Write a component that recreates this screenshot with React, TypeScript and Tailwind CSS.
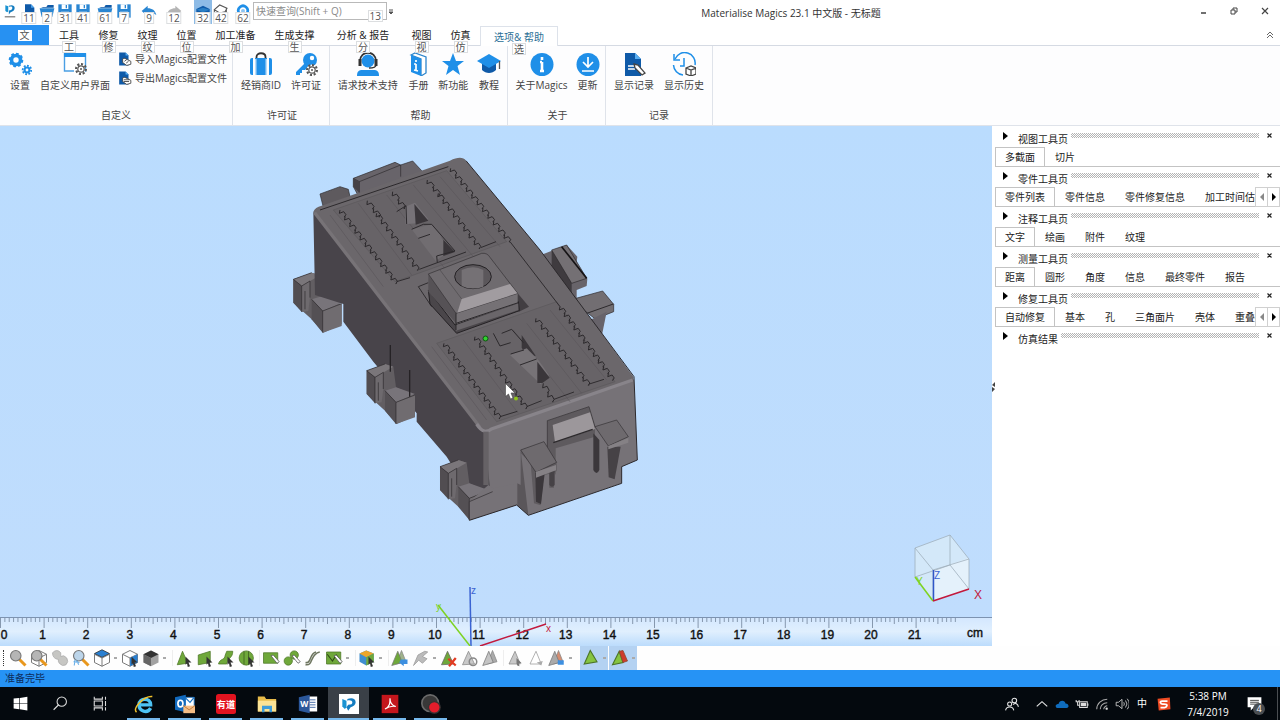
import { ReactNode } from 'react';
import clsx from 'clsx';

const BLUE = '#1f8fe8';
const NAVY = '#0f5aa8';

/* ---------- small drawing helpers ---------- */

const Icon = (props: { size?: string, box?: string, children: ReactNode }) => (
  <svg className={clsx('shrink-0', props.size ?? 'size-6')} viewBox={props.box ?? '0 0 24 24'} fill="none" aria-hidden="true">
    {props.children}
  </svg>
);

const Gear = (props: { x: number, y: number, r: number, color: string, hole?: number, width?: number }) => (
  <g>
    <circle cx={props.x} cy={props.y} r={props.r} stroke={props.color} strokeWidth={props.width ?? 3} />
    <circle
      cx={props.x}
      cy={props.y}
      r={props.r + 1.8}
      stroke={props.color}
      strokeWidth="2"
      pathLength="16"
      strokeDasharray="1.1 0.9"
    />
    {props.hole !== undefined && <circle cx={props.x} cy={props.y} r={props.hole} fill={props.color} />}
  </g>
);

/* ---------- title bar ---------- */

const KeyTip = (props: { children: ReactNode, className?: string }) => (
  <span
    className={clsx(
      'absolute z-10 border border-[#dcdee0] bg-white px-px text-[10px] leading-[10px] text-[#555]',
      props.className ?? 'left-1/2 top-3 -translate-x-1/2',
    )}
  >
    {props.children}
  </span>
);

const FileGlyph = () => <Icon size="size-4"><path d="M6 2h9l5 5v14H6z" fill={NAVY} /><path d="M15 2v5h5z" fill="#4ba3ee" /></Icon>;
const FolderGlyph = () => <Icon size="size-4"><path d="M3 6h8l2-3h9v4H6z" fill={NAVY} /><path d="M1 8h22l-3 13H4z" fill="#2a86d2" /></Icon>;
const SaveGlyph = () => <Icon size="size-4"><path d="M2 2h20v20H2z" fill="#2a86d2" /><path d="M7 2h10v7H7zM6 13h12v9H6z" fill="#fff" /><path d="M13 3h2v5h-2z" fill="#2a86d2" /></Icon>;
const UndoGlyph = (props: { color: string, flip?: boolean }) => (
  <Icon size="size-4">
    <path
      d={props.flip ? 'M23 12 14 4v4C7 8 3 11 1 18c4-3 8-3 13-2v4z' : 'M1 12 10 4v4c7 0 11 3 13 10-4-3-8-3-13-2v4z'}
      fill={props.color}
    />
  </Icon>
);

const quickItems: { tip: string, label: string, slot: string, icon: ReactNode }[] = [
  { tip: '11', label: 'New', slot: 'w-[18px]', icon: <FileGlyph /> },
  { tip: '2', label: 'Open', slot: 'w-[18px]', icon: <FolderGlyph /> },
  { tip: '31', label: 'Save', slot: 'w-[18px]', icon: <SaveGlyph /> },
  { tip: '41', label: 'Save as', slot: 'w-[18px]', icon: <SaveGlyph /> },
  { tip: '61', label: 'Import part', slot: 'ml-1 w-[18px]', icon: <FolderGlyph /> },
  { tip: '7', label: 'Save part', slot: 'ml-px w-[18px]', icon: <SaveGlyph /> },
  { tip: '9', label: 'Undo', slot: 'ml-1 w-6', icon: <UndoGlyph color="#2a86d2" /> },
  { tip: '12', label: 'Redo', slot: 'ml-px w-6', icon: <UndoGlyph color="#b4b4b4" flip /> },
  {
    tip: '32', label: 'Box view', slot: 'ml-2 w-[18px] bg-[#8dbbe6]',
    icon: <Icon size="size-4"><path d="m2 9 10-5 10 5v12H2z" fill={NAVY} /><path d="m2 10 10-3 10 3-10 4z" fill="#2a7fc4" /></Icon>,
  },
  {
    tip: '42', label: 'Mail view', slot: 'w-[18px]',
    icon: <Icon size="size-4"><path d="m2 10 8-7 11 5-3 5-8 2zM2 10v10h18V8" stroke="#555" strokeWidth="1.6" /></Icon>,
  },
  {
    tip: '62', label: 'Reset', slot: 'ml-1 w-[18px]',
    icon: <Icon size="size-4"><path d="M6 15a7 7 0 1 1 12 0" stroke="#1f8fe8" strokeWidth="4" /><circle cx="12" cy="12" r="3" fill="#8cc4f2" /></Icon>,
  },
];

const MagicsLogo = (props: { size: string }) => (
  <Icon size={props.size}>
    <path d="m4 2 5 2v9l-2 1-3-2z" fill="#1a93d2" />
    <path d="M10 3c5-2 10-1 10 4 0 4-3 6-7 7l-3 4v-7c4 0 6-1 6-4s-3-3-6-2z" fill="#137cc0" />
    <path d="M3 22h18" stroke="#444" strokeWidth="1.500" />
  </Icon>
);

const TitleBar = () => (
  <header className="flex h-6 items-start">
    <div className="flex w-5 flex-col items-center pt-1">
      <MagicsLogo size="size-[14px]" />
    </div>
    {quickItems.map((item) => (
      <button key={item.tip} aria-label={item.label} className={clsx('relative flex h-6 items-start justify-center pt-[3px]', item.slot)}>
        {item.icon}
        <KeyTip>{item.tip}</KeyTip>
      </button>
    ))}
    <div className="relative ml-px w-[134px]">
      <input
        aria-label="快速查询"
        placeholder="快速查询(Shift + Q)"
        className="mt-[2px] block h-[18px] w-full border border-[#b9b9b9] bg-white px-0.5 text-[10px] leading-4 placeholder:text-[#8a8a8a]"
      />
      <KeyTip className="right-1 top-[10px]">13</KeyTip>
    </div>
    <button aria-label="Customize toolbar" className="flex h-6 w-2 items-center justify-center">
      <Icon size="size-[6px]" box="0 0 6 6"><path d="M1 1h4M1 3h4L3 5z" stroke="#555" fill="#555" /></Icon>
    </button>
    <h1 className="flex-1 pt-[5px] text-center text-[10px] leading-4 text-[#333]">Materialise Magics 23.1 中文版 - 无标题</h1>
    <div className="flex text-[#444]">
      <button aria-label="Minimize" className="flex h-[22px] w-[31px] items-center justify-center">
        <Icon size="size-[10px]" box="0 0 10 10"><path d="M3 7h5" stroke="#333" strokeWidth="1.4" /></Icon>
      </button>
      <button aria-label="Restore" className="flex h-[22px] w-[31px] items-center justify-center">
        <Icon size="size-[10px]" box="0 0 10 10"><path d="M2 4h4v4H2zM4 4V2h4v4H6" stroke="#444" /></Icon>
      </button>
      <button aria-label="Close" className="flex h-[22px] w-[31px] items-center justify-center">
        <Icon size="size-[10px]" box="0 0 10 10"><path d="m2 2 6 6m0-6L2 8" stroke="#444" strokeWidth="1.2" /></Icon>
      </button>
    </div>
  </header>
);

/* ---------- ribbon ---------- */

const ribbonTabs: { label: string, tip: string, width: string }[] = [
  { label: '工具', tip: '工', width: 'w-10' },
  { label: '修复', tip: '修', width: 'w-[39px]' },
  { label: '纹理', tip: '纹', width: 'w-[39px]' },
  { label: '位置', tip: '位', width: 'w-[39px]' },
  { label: '加工准备', tip: '加', width: 'w-[59px]' },
  { label: '生成支撑', tip: '生', width: 'w-[59px]' },
  { label: '分析 & 报告', tip: '分', width: 'w-[78px]' },
  { label: '视图', tip: '视', width: 'w-[39px]' },
  { label: '仿真', tip: '仿', width: 'w-[39px]' },
  { label: '选项& 帮助', tip: '选', width: 'w-[78px]' },
];

const RibbonTabs = () => (
  <nav className="flex h-[22px] items-end border-b border-[#d5dae3] text-[10px]">
    <button className="flex h-5 w-[49px] items-center justify-center bg-[#2791f2]">
      <span className="bg-white px-0.5 leading-[11px] text-[#555]">文</span>
    </button>
    {ribbonTabs.map((tab) => (
      <button
        key={tab.label}
        className={clsx(
          'relative flex h-5 items-start justify-center whitespace-nowrap pt-1 leading-3',
          tab.width,
          tab.tip === '选' ? '-mb-px border-x border-t border-[#dde2ea] bg-white text-[#2c6f96]' : 'text-[#222]',
        )}
      >
        {tab.label}
        <KeyTip className="left-1/2 top-4 -translate-x-1/2">{tab.tip}</KeyTip>
      </button>
    ))}
    <button aria-label="Collapse ribbon" className="ml-auto mr-1 flex h-5 w-3 items-center justify-center">
      <Icon size="size-2" box="0 0 8 8"><path d="m1 4 3-3 3 3M1 7l3-3 3 3" stroke="#666" /></Icon>
    </button>
  </nav>
);

const PageIcon = (props: { out?: boolean }) => (
  <Icon size="size-[14px]">
    <path d="M2 1h11l5 5v17H2z" fill={NAVY} />
    <path d="M13 1v5h5z" fill="#57aef2" />
    <path d="M8 12c3-3 5 0 8 1l6 3v5l-7 2-7-5z" fill="#fff" stroke="#444" strokeWidth="1.5" />
    <path d={props.out ? 'M10 15h9M10 18h9' : 'M11 16l4-3M14 19l4-3'} stroke="#444" strokeWidth="1.5" />
  </Icon>
);

const RibbonButton = (props: { label: string, width: string, children: ReactNode }) => (
  <button className={clsx('flex flex-col items-center whitespace-nowrap text-[10px] leading-4 text-[#444]', props.width)}>
    <Icon>{props.children}</Icon>
    <span className="mt-px">{props.label}</span>
  </button>
);

const RibbonGroup = (props: { title: string, width: string, children: ReactNode }) => (
  <section className={clsx('flex flex-col justify-between border-r border-[#dfe3ea] pb-0.5 pt-[6px]', props.width)}>
    <div className="flex justify-center">{props.children}</div>
    <h2 className="text-center text-[10px] leading-4 text-[#444]">{props.title}</h2>
  </section>
);

const Ribbon = () => (
  <div className="flex h-20 border-b border-[#dfe3ea] bg-[#fdfdfe]">
    <RibbonGroup title="自定义" width="w-[233px]">
      <RibbonButton label="设置" width="w-10">
        <Gear x={8} y={8} r={4.5} color={BLUE} width={3.6} />
        <Gear x={19} y={18} r={2.4} color={BLUE} width={2} />
      </RibbonButton>
      <RibbonButton label="自定义用户界面" width="w-[70px]">
        <path d="M1.5 2h21v17h-21z" fill="#fff" stroke="#4a9fe4" strokeWidth="1.4" />
        <path d="M1 1h22v4H1z" fill={BLUE} />
        <path d="M11 13h11v10H11z" fill="#fff" />
        <Gear x={18} y={17} r={3.2} color="#555" width={1.2} hole={1} />
      </RibbonButton>
      <div className="-mt-px ml-2 flex flex-1 flex-col gap-[3px] text-[10px] leading-4 text-[#444]">
        <button className="flex items-center gap-[3px] whitespace-nowrap"><PageIcon />导入Magics配置文件</button>
        <button className="flex items-center gap-[3px] whitespace-nowrap"><PageIcon out />导出Magics配置文件</button>
      </div>
    </RibbonGroup>

    <RibbonGroup title="许可证" width="w-[97px] pl-0.5">
      <RibbonButton label="经销商ID" width="w-12">
        <path d="M7.5 8V5c0-5 9-5 9 0v3" stroke="#333" strokeWidth="1.8" />
        <path d="M1 8q0-2 2-2h1v17H3q-2 0-2-2zM6 6h12v17H6zM20 6h1q2 0 2 2v13q0 2-2 2h-1z" fill={BLUE} />
        <path d="M6 7h1.5v16H6zM16.500 7H18v16h-1.500z" fill="#b9dcf8" />
      </RibbonButton>
      <RibbonButton label="许可证" width="w-[42px]">
        <path d="m11 11-9 9v3h4v-2h2v-3h3l4-4z" fill={BLUE} />
        <circle cx="16" cy="8" r="7" fill={BLUE} />
        <circle cx="18" cy="6" r="2.200" fill="#fff" />
        <circle cx="18" cy="18" r="5.500" fill="#fff" />
        <Gear x={18} y={18} r={3.2} color="#555" width={1.2} hole={1} />
      </RibbonButton>
    </RibbonGroup>

    <RibbonGroup title="帮助" width="w-[178px] pl-1">
      <RibbonButton label="请求技术支持" width="w-[68px]">
        <circle cx="12" cy="9" r="6.500" fill={BLUE} />
        <path d="M4 9c0-11 16-11 16 0" stroke="#333" strokeWidth="1.8" />
        <path d="M2.500 7h3v7h-3zM18.500 7h3v7h-3z" fill="#333" />
        <path d="M20 13c0 2-3 3-7 3" stroke="#333" strokeWidth="1.300" />
        <path d="M1 24c0-6 3-6 7-6h8c4 0 7 0 7 6z" fill={BLUE} />
      </RibbonButton>
      <RibbonButton label="手册" width="w-[34px]">
        <path d="m4 3 4-2 11 4v16l-5 3V7z" fill="#fff" stroke="#2e86cc" strokeWidth="1.300" />
        <path d="m4 3 10 4v17L4 20z" fill={BLUE} />
        <path d="M9 8v2M9 12v7M7 12h2M7 18l4 1" stroke="#fff" strokeWidth="1.700" />
      </RibbonButton>
      <RibbonButton label="新功能" width="w-9">
        <path d="m12 1 3 8h8l-6.500 5 2.500 9-7-5-7 5 2.500-9L1 9h8z" fill={BLUE} />
      </RibbonButton>
      <RibbonButton label="教程" width="w-9">
        <path d="M5 11v7c4 4 10 4 14 0v-7l-7 4z" fill={NAVY} />
        <path d="m0 9 12-7 12 7-12 7z" fill={BLUE} />
        <path d="M22.500 9v8" stroke="#555" strokeWidth="1.300" />
      </RibbonButton>
    </RibbonGroup>

    <RibbonGroup title="关于" width="w-[98px] pl-0.5">
      <RibbonButton label="关于Magics" width="w-[60px]">
        <circle cx="12" cy="12.500" r="11.500" fill={BLUE} />
        <path d="M12 5v3M12 10v9M10 10h2M10 19h4" stroke="#fff" strokeWidth="2.600" />
      </RibbonButton>
      <RibbonButton label="更新" width="w-8">
        <circle cx="12" cy="12.500" r="11.500" fill={BLUE} />
        <path d="M12 5v10m-5-5 5 5 5-5M6 19h12" stroke="#fff" strokeWidth="1.700" />
      </RibbonButton>
    </RibbonGroup>

    <RibbonGroup title="记录" width="w-[107px]">
      <RibbonButton label="显示记录" width="w-[50px]">
        <path d="M3 1h10l6 6v17H3z" fill={NAVY} />
        <path d="M13 1v6h6z" fill="#57aef2" />
        <path d="M6 14h7M6 17h7" stroke="#fff" strokeWidth="1.300" />
        <path d="m12 12 4 1 7 8-3 2-7-7z" fill="#fff" stroke="#444" strokeWidth="1.300" />
      </RibbonButton>
      <RibbonButton label="显示历史" width="w-[50px]">
        <path d="M3 7A10.500 10.500 0 0 1 23 13M11 23A10.500 10.500 0 0 1 1.500 13" stroke={BLUE} strokeWidth="1.500" />
        <path d="M2 2v6h6M12 6v8H8" stroke={BLUE} strokeWidth="1.500" />
        <path d="m14 16 5-2 5 2v6l-5 2-5-2zM14 16l5 2 5-2M19 18v6" fill="#fff" stroke="#444" strokeWidth="1.300" />
      </RibbonButton>
    </RibbonGroup>
  </div>
);

/* ---------- 3D view ---------- */

type Point = [number, number];

// Jagged slot edge running from one point to another
const teeth = ([x1, y1]: Point, [x2, y2]: Point, count: number) => {
  const dx = (x2 - x1) / count;
  const dy = (y2 - y1) / count;
  let d = `M${x1} ${y1}`;
  for (let i = 0; i < count; i++) {
    d += `l${dx * 0.2 - 5} ${dy * 0.5}l13 -5l${dx * 0.5 - 1} ${dy * 0.45}l-5 7l${dx * 0.3 - 2} ${dy * 0.05 - 2}`;
  }
  return d;
};

const slotRows: [Point, Point, number][] = [
  [[180, 180], [350, 400], 11],
  [[262, 152], [300, 200], 2],
  [[290, 190], [415, 360], 8],
  [[338, 125], [375, 175], 2],
  [[442, 90], [480, 135], 2],
  [[475, 130], [600, 295], 8],
  [[512, 55], [690, 275], 11],
  [[492, 580], [660, 805], 11],
  [[585, 560], [740, 775], 10],
  [[790, 700], [820, 755], 2],
  [[768, 505], [928, 705], 9],
  [[840, 470], [1000, 690], 11],
];

// Clips on the long side, drawn at their own corner
const SideClip = (props: { x: number, y: number }) => (
  <g transform={`translate(${props.x} ${props.y})`}>
    <path d="M0 20 55 0 80 8 88 70 145 95 145 155 90 180 55 140 0 90z" fill="#625e62" />
    <path d="M0 20 55 0 80 8 25 40z" fill="#7a767a" />
    <path d="M0 20 25 40V118L0 90z" fill="#514d51" />
    <path d="M25 40 50 25V75L45 115 25 118z" fill="#6e6a6e" />
    <path d="M55 80 88 70 145 90 88 115z" fill="#78747a" />
    <path d="M55 80 88 115V180L55 140z" fill="#545054" />
    <path d="M88 115 145 92V160L88 180z" fill="#706c70" />
    <path d="M0 20 25 40V118M25 40 50 25V75M35 55v55M55 80 88 115V180M88 115l57-22M0 20 55 0" stroke="#2c292c" strokeWidth="2" />
  </g>
);

const Part = () => (
  <g transform="translate(280 150) scale(0.333333)" fill="none" strokeLinejoin="round">
    {/* rear clips */}
    <path d="M120 132 180 110 205 118 210 140 130 172z" fill="#5e5a5e" stroke="#2c292c" strokeWidth="2" />
    <path d="M220 85 345 37 362 45 398 33 425 62 425 80 232 132 220 110z" fill="#68646a" stroke="#2c292c" strokeWidth="2" />
    <path d="m220 85 18 10 124-50v35M238 95v35" stroke="#2c292c" strokeWidth="2" />
    <path d="m220 85 18 10v33l-18-18z" fill="#464246" />

    {/* right clips */}
    <path d="m770 320 90-35 32 35-4 30 34 36-2 22-30 12v50z" fill="#68646a" />
    <path d="m815 300 60 75v65l-60-60z" fill="#3f3b3f" />
    <path d="m815 300 45-15 60 100-45 15z" fill="#747074" stroke="#2c292c" strokeWidth="2" />
    <path d="m845 290 75 95" stroke="#151315" strokeWidth="5" />
    <path d="m888 445 80-22 33 40v22l-55 22-52-40z" fill="#726e72" stroke="#2c292c" strokeWidth="2" />
    <path d="m930 510 50-25-16 80z" fill="#67636a" />
    <path d="M915 492 1000 462" stroke="#2c292c" strokeWidth="3" />

    <SideClip x={40} y={368} />

    {/* body */}
    <path d="M100 185 105 435 190 462V515L280 635 410 790V815L500 920 550 1000 560 1060 640 1030 625 830z" fill="#48444a" />
    <path d="M100 185Q105 172 125 167L510 32Q545 15 558 32L780 300 965 550 1060 680 1060 692 625 843 600 832z" fill="#6b676b" />
    <path d="M612 842 1062 688 1072 930 1025 950 1025 1000 745 1096 710 1065 568 1111 535 1050 630 1015z" fill="#767277" />
    <path d="M104 188 600 832" stroke="#777377" strokeWidth="10" />
    <path d="M590 822q22 34 44 15L1058 690" stroke="#88848a" strokeWidth="10" />
    <path d="M618 845V1005" stroke="#666266" strokeWidth="16" />
    <path d="M120 180 505 50M558 32 780 300 1062 680 1072 930" stroke="#2c292c" strokeWidth="3" />

    <SideClip x={260} y={642} />
    <SideClip x={480} y={930} />
    <path d="M568 1055 625 1005 640 1015 710 1000V1065L568 1111z" fill="#767277" />
    <path d="M568 1055v56M568 1055l70-30" stroke="#2c292c" strokeWidth="2" />
    <path d="M331 585v80M389 660v80" stroke="#252225" strokeWidth="4" />

    {/* recessed fields on the top face */}
    <path d="M160 180 500 62 680 275 345 395zM470 580 830 455 1005 695 650 815z" fill="#676367" stroke="#5b575b" strokeWidth="2" />
    <path
      d="m150 195 160 215M235 160l160 215M320 135l190 240M400 105l180 215M480 80l180 210M455 590l165 220M550 570l165 220M700 540l170 215M740 520l165 210M810 480l170 210"
      stroke="#5a565a"
      strokeWidth="2"
    />
    <path d="m690 275 150 195M350 395l40-12M418 358l140-52M602 293l46-18M660 800l52-16M740 770l45-18M822 748l60-22M928 702l44-14M415 410l40 60M415 410l30-12" stroke="#2f2c2f" strokeWidth="3" />

    {/* openings */}
    <path d="m375 170 30-12 40 50-20 10-48 5z" fill="#767277" />
    <path d="m403 162 42 50-38 12z" fill="#3a363a" />
    <path d="m395 238 60-15 60 75-48 35z" fill="#716d71" />
    <path d="m480 258 45 48-35 12V270z" fill="#3a363a" />
    <path d="m350 185 28-18 2 55M395 238l35-15h25l70 80-55 15 2 20M415 265l35-12" stroke="#2c292c" strokeWidth="3" />
    <path d="m725 555 42 62-30 5-12-30z" fill="#3a363a" />
    <path d="m690 615 50-20 35 35 32 45-25 28z" fill="#777377" />
    <path d="m772 635 37 48-22 16h-15z" fill="#3a363a" />
    <path d="m640 550 20 38 32-10M665 550l30-12 35 40M692 612l40-12M720 645l50-18" stroke="#2c292c" strokeWidth="3" />

    {/* raised boss */}
    <path d="m612 310 135 160-30 15-115-155z" fill="#423e42" />
    <path d="M445 420 525 525 715 455 718 482 530 550 450 462z" fill="#4a464a" stroke="#242124" strokeWidth="3" />
    <path d="M445 372 528 485V520L445 425z" fill="#565256" />
    <path d="M528 485 713 425V460L528 522z" fill="#757175" />
    <path d="m528 525 187-65v20l-187 62z" fill="#6a666a" />
    <path d="M445 372 605 310Q622 308 630 322L713 430 528 490z" fill="#6f6b6f" stroke="#343134" strokeWidth="2" />
    <path d="M545 447 690 402 712 430 532 488z" fill="#a19ca0" />
    <path d="m480 360 65 87" stroke="#4c484c" strokeWidth="2" />
    <path d="M528 520 715 458M528 490v50" stroke="#2c292c" strokeWidth="3" />
    <ellipse cx="579" cy="380" rx="55" ry="36" fill="#5b575b" stroke="#242124" strokeWidth="3" />
    <path d="M545 408V360q35-16 65 0v50q-35 12-65-2z" fill="#757175" />

    {slotRows.map(([from, to, count]) => (
      <path key={from.join()} d={teeth(from, to, count)} stroke="#2b282b" strokeWidth="3" />
    ))}

    {/* front latches */}
    <path d="m802 812 125-42 18 60v30l-118 35v80l-25-60z" fill="#5e5a5e" />
    <path d="m802 812 125-42 18 60M802 812v80" stroke="#343134" strokeWidth="2" />
    <path d="m818 825 112-38 15 50-120 40z" fill="#9c979b" />
    <path d="m820 878 118-40" stroke="#2c292c" strokeWidth="4" />
    <path d="M722 900 745 1096 712 1065V1000L722 1005z" fill="#5a565a" />
    <path d="m722 900 70-22 38 60v25l-8 5v45h-14v-42l-16 5-10 90-20-6-10-120-30-30z" fill="#5f5b5f" />
    <path d="M766 968 795 962 783 1062 768 1055z" fill="#3b373b" />
    <path d="M808 965v40q8 10 16 0v-45z" fill="#464246" />
    <path d="m722 900 70-25 38 62-62 30z" fill="#6e6a6e" stroke="#343134" strokeWidth="2" />
    <path d="m768 965 60-20v16l-60 22z" fill="#858185" />
    <path d="M940 850v110q10 18 18 0V870z" fill="#3b373b" />
    <path d="M982 890h40l-18 98-18-6z" fill="#464246" />
    <path d="m945 830 65-20 35 50-60 28z" fill="#6e6a6e" stroke="#343134" strokeWidth="2" />
    <path d="m985 888 60-24v14l-60 20z" fill="#858185" />
    <path d="M745 1096 1025 1000V950L1072 930M568 1111l142-46 35 31" stroke="#2c292c" strokeWidth="3" />
  </g>
);

const CM = 43.6;

const Ruler = () => (
  <g>
    <rect x="0" y="617" width="992" height="29" fill="url(#rulerFill)" />
    <path d="M0 617.500H992" stroke="#7d93b0" />
    {Array.from({ length: 220 }, (_, i) => {
      const length = i % 10 === 0 ? 10 : i % 5 === 0 ? 6 : 4;
      return <path key={i} d={`M${(i * CM) / 10 + 0.5} 618v${length}`} stroke="#8698ae" />;
    })}
    <g fontSize="12" fill="#111" textAnchor="middle" stroke="#111" strokeWidth="0.400">
      {Array.from({ length: 22 }, (_, i) => (
        <text key={i} x={i === 0 ? 4 : i * CM - 1} y="639">{i}</text>
      ))}
      <text x="975" y="637">cm</text>
    </g>
  </g>
);

const Viewport = () => (
  <main className="min-w-0 flex-1 bg-[#bedefe]">
    <svg className="block w-full font-['Liberation_Sans',sans-serif]" viewBox="0 126 992 520" role="img" aria-label="3D view">
      <defs>
        <linearGradient id="sky" x1="0" y1="0" x2="0" y2="1">
          <stop offset="0" stopColor="#badcfe" />
          <stop offset="1" stopColor="#c0ddfd" />
        </linearGradient>
        <linearGradient id="rulerFill" x1="0" y1="0" x2="0" y2="1">
          <stop offset="0" stopColor="#d3e7fe" />
          <stop offset="0.500" stopColor="#e0effe" />
          <stop offset="1" stopColor="#bcdcfc" />
        </linearGradient>
      </defs>
      <rect x="0" y="126" width="992" height="491" fill="url(#sky)" />
      <Part />
      <circle cx="485.500" cy="338.500" r="2.500" fill="#2fd32f" stroke="#145214" />
      <circle cx="516" cy="398.500" r="2" fill="#8fc41c" />
      <path d="M505.500 383.500v13l3-2.500 2 5 2.500-1-2-5h4z" fill="#fff" stroke="#444" strokeWidth="0.600" />

      <Ruler />

      {/* origin axes */}
      <g fontSize="10" strokeWidth="1.500">
        <path d="M471 646 470 587" stroke="#3a63d2" />
        <path d="M470 646 438 605" stroke="#7ed321" />
        <path d="M480 646 546 624" stroke="#c2183c" />
        <text x="471" y="594" fill="#3a63d2">z</text>
        <text x="436" y="610" fill="#7ed321">y</text>
        <text x="546" y="632" fill="#c2183c">x</text>
      </g>

      {/* orientation cube */}
      <path d="m915 548 35-13 19 24v30l-36 12-18-24z" fill="#dcecf6" fillOpacity="0.700" />
      <path d="m933 570 36-12v31l-36 12z" fill="#e8f3fb" fillOpacity="0.800" />
      <path
        d="m915 548 35-13 19 24-36 11zM915 548v29M969 559v30M950 535v30l19 24M950 565l-35 12M933 570v31"
        fill="none"
        stroke="#9fb0bd"
        strokeWidth="0.800"
      />
      <path d="M933.500 570v31" stroke="#2f56c8" strokeWidth="1.500" />
      <path d="m933 601-18-24" stroke="#7ed321" strokeWidth="1.500" />
      <path d="m933 601 36-12" stroke="#c2183c" strokeWidth="1.500" />
      <text x="934" y="579" fontSize="10" fill="#3a63d2">Z</text>
      <text x="916" y="585" fontSize="10" fill="#7ed321">Y</text>
      <text x="974" y="599" fontSize="12" fill="#c2183c">X</text>
    </svg>
  </main>
);

/* ---------- tool pages ---------- */

const toolPages: { title: string, tabs: string[], scroll?: boolean }[] = [
  { title: '视图工具页', tabs: ['多截面', '切片'] },
  { title: '零件工具页', tabs: ['零件列表', '零件信息', '零件修复信息', '加工时间估'], scroll: true },
  { title: '注释工具页', tabs: ['文字', '绘画', '附件', '纹理'] },
  { title: '测量工具页', tabs: ['距离', '圆形', '角度', '信息', '最终零件', '报告'] },
  { title: '修复工具页', tabs: ['自动修复', '基本', '孔', '三角面片', '壳体', '重叠'], scroll: true },
  { title: '仿真结果', tabs: [] },
];

const ToolPages = () => (
  <aside className="flex w-[288px] bg-white pt-px text-[10px] text-[#222]">
    <div className="flex w-[3px] items-center justify-center">
      <Icon size="h-3 w-[3px]" box="0 0 3 12"><path d="m3 1-3 3 3 2zM0 6l3 2-3 3z" fill="#444" /></Icon>
    </div>
    <div className="min-w-0 flex-1">
      {toolPages.map((page) => (
        <section key={page.title} className="h-10">
          <div className="flex h-5 items-start">
            <button aria-label={`展开 ${page.title}`} className="flex h-5 w-[23px] items-start pl-2 pt-[5px]">
              <Icon size="h-[8px] w-[5px]" box="0 0 5 8"><path d="m0 0 5 4-5 4z" fill="#000" /></Icon>
            </button>
            <h2 className="pt-1 leading-4">{page.title}</h2>
            <div className="ml-[3px] mt-[6px] h-[5px] flex-1 bg-[repeating-conic-gradient(#b4b4b4_0_25%,transparent_0_50%)] bg-[size:2px_2px]" />
            <button aria-label={`关闭 ${page.title}`} className="flex h-5 w-[21px] items-start justify-center pt-[6px]">
              <Icon size="size-[5px]" box="0 0 5 5"><path d="m0.500 0.500 4 4m0-4-4 4" stroke="#222" strokeWidth="1.200" /></Icon>
            </button>
          </div>
          {page.tabs.length > 0 && (
            <div className="flex h-5">
              <div className="flex min-w-0 flex-1 border-b border-[#c3c3c3]">
                {page.tabs.map((tab, i) => (
                  <button
                    key={tab}
                    className={clsx(
                      'shrink-0 whitespace-nowrap',
                      i === 0 && 'border-x border-t border-[#c3c3c3] px-[9px] leading-[18px]',
                      i > 0 && 'pl-[10px] leading-5',
                      i > 0 && i < page.tabs.length - 1 && 'pr-[10px]',
                    )}
                  >
                    {tab}
                  </button>
                ))}
              </div>
              {page.scroll && (
                <div className="flex w-[25px]">
                  <button aria-label="Previous tabs" className="flex flex-1 items-center justify-center border border-[#d0d0d0]">
                    <Icon size="h-2 w-1" box="0 0 4 8"><path d="M4 0 0 4l4 4z" fill="#888" /></Icon>
                  </button>
                  <button aria-label="Next tabs" className="flex flex-1 items-center justify-center border border-l-0 border-[#d0d0d0]">
                    <Icon size="h-2 w-1" box="0 0 4 8"><path d="m0 0 4 4-4 4z" fill="#000" /></Icon>
                  </button>
                </div>
              )}
            </div>
          )}
        </section>
      ))}
    </div>
  </aside>
);

/* ---------- marking toolbar ---------- */

const GREEN = '#6fa83a';
const cursor = <path d="m14 10 8 8h-4l2 5-3 1-1-5-2 2z" fill="#333" />;
const brush = <path d="m12 9 8 10 3-2-8-9z" fill="#fff" stroke="#555" />;
const lens = (color = '#b5b5b5') => (
  <>
    <path d="m13 13 9 9" stroke="#e8971d" strokeWidth="4" />
    <circle cx="9" cy="9" r="7" fill={color} stroke="#777" strokeWidth="1.500" />
  </>
);
const wireCube = <path d="m2 7 10-5 10 5v11l-10 5-10-5zM2 7l10 5 10-5M12 12v11" stroke="#777" strokeWidth="1.300" />;
const twoTriangles = (front: string, back: string) => (
  <>
    <path d="M7 20 14 2l6 15z" fill={back} stroke="#888" />
    <path d="m1 22 8-19 6 15z" fill={front} stroke="#777" />
  </>
);

type Tool = 'dot' | 'gap' | { name: string, art: ReactNode };

const tools: Tool[] = [
  { name: 'Zoom', art: lens() },
  { name: 'Zoom part', art: <>{wireCube}{lens()}</> },
  { name: 'Unzoom', art: <path d="M2 5q6-6 11 0v5q4-3 8 2 3 5-1 9-5 3-9-2-2-3-1-5-8-1-8-9z" fill="#c6c6c3" stroke="#aaa" /> },
  { name: 'Zoom selection', art: <>{lens('#bcd5ea')}<path d="m4 14-1 8m3-7 3 6M2 17l8 1" stroke="#6bb0e8" strokeWidth="1.500" /></> },
  { name: 'Default view', art: <>{wireCube}<path d="m2 6 10-5 10 5-10 5z" fill="#2a7fd0" stroke="#333" /></> },
  'dot',
  { name: 'Select cube', art: <><path d="m2 7 10-5 10 5v11l-10 5-10-5z" fill="#fff" />{wireCube}<path d="m12 12 10-5v11l-10 5z" fill="#2a7fd0" />{cursor}</> },
  { name: 'Shade', art: <><path d="m2 7 10-5 10 5v11l-10 5-10-5z" fill="#a2a2a2" /><path d="m2 7 10-5 10 5-10 5z" fill="#333" /><path d="m2 7 10 5v11l-10-5z" fill="#666" /></> },
  'dot',
  'gap',
  { name: 'Mark triangle', art: <><path d="m3 21 7-18 7 16z" fill={GREEN} stroke="#4c7527" />{cursor}</> },
  { name: 'Mark plane', art: <><path d="M3 8 19 3v15L3 21z" fill={GREEN} stroke="#4c7527" />{cursor}</> },
  { name: 'Mark surface', art: <><path d="M2 20c2-8 8-4 9-12l2-5h8c0 9-6 8-8 17z" fill={GREEN} stroke="#4c7527" />{cursor}</> },
  { name: 'Mark shell', art: <><circle cx="11" cy="12" r="9.500" fill={GREEN} stroke="#4c7527" /><path d="M8 3v18M14 3v18" stroke="#38581c" />{cursor}</> },
  'gap',
  { name: 'Rectangle mark', art: <><path d="M2 5h19v14H2z" fill={GREEN} stroke="#4c7527" />{brush}</> },
  { name: 'Free-form mark', art: <><circle cx="7" cy="16" r="5.500" fill={GREEN} stroke="#4c7527" /><circle cx="15" cy="8" r="5.500" fill={GREEN} stroke="#4c7527" />{brush}</> },
  { name: 'Curve mark', art: <path d="M2 21c11 2 5-14 19-17M2 18c8 2 5-12 14-14" stroke="#6d755f" strokeWidth="2" /> },
  { name: 'Texture mark', art: <><path d="M2 4h19v16H2z" fill={GREEN} stroke="#4c7527" /><path d="m3 7 7 9 5-8 5 7" stroke="#2e4b15" strokeWidth="1.500" />{brush}</> },
  'dot',
  'gap',
  { name: 'Colour cube', art: <><path d="m2 6 9-4 10 4v11l-10 5-9-5z" fill="#3f8ed0" /><path d="m2 6 9-4 10 4-10 5z" fill="#eda629" /><path d="m11 11 10-5v11l-10 5z" fill={GREEN} />{cursor}</> },
  'dot',
  'gap',
  { name: 'Invert mark', art: <>{twoTriangles(GREEN, '#9fb38b')}<path d="M13 14h9v6h-5v3l-6-5z" fill="#3d8fe0" /></> },
  { name: 'Smooth mark', art: <path d="m2 22 6-14 9-5 4 1-7 6 6 3-6 6-5-4z" fill="#bbb" stroke="#999" /> },
  'dot',
  { name: 'Delete marked', art: <><path d="m2 21 8-18 8 17z" fill={GREEN} stroke="#666" /><path d="m11 13 10 9m0-10-9 11" stroke="#e23a22" strokeWidth="3" /></> },
  { name: 'Hide marked', art: <><path d="m2 21 8-18 8 17z" fill="#c9c9c9" stroke="#888" /><circle cx="16" cy="17" r="5" stroke="#888" strokeWidth="2" /></> },
  { name: 'Copy marked', art: twoTriangles('#c4c4c4', '#aaa') },
  'gap',
  { name: 'Unmark', art: <><path d="m4 20 8-17 7 17z" fill="#c9c9c9" stroke="#888" /><path d="m14 12 7 7h-4l1 4-3-1-1-3z" fill="#777" /></> },
  { name: 'Unmark all', art: <><path d="m4 20 8-17 7 17z" fill="#fff" stroke="#999" /><path d="m13 18 8-2-2 6z" fill="#aaa" /></> },
  { name: 'Grow mark', art: <>{twoTriangles('#aaa', '#d68d70')}<path d="M13 15h8v6h-8z" fill="#3d8fe0" /></> },
  'dot',
];

const ToolDot = () => (
  <span className="flex w-[7px] items-center justify-center"><span className="h-0.5 w-[3px] bg-[#aaa]" /></span>
);

const Toolbar = () => (
  <div className="flex h-6 bg-[#fefefe]">
    <div className="flex w-[7px] items-center justify-center"><span className="h-4 border-l border-dotted border-[#333]" /></div>
    {tools.map((tool, i) => {
      if (tool === 'dot') {
        return <ToolDot key={i} />;
      }
      if (tool === 'gap') {
        return <span key={i} className={clsx('my-1 border-r border-[#eee]', tools[i - 1] === 'dot' ? 'w-[5px]' : 'w-[3px]')} />;
      }
      return (
        <button key={i} aria-label={tool.name} className="flex w-[21px] items-center justify-center">
          <Icon size="size-[18px]">{tool.art}</Icon>
        </button>
      );
    })}
    <div className="ml-[6px] flex gap-px">
      <div className="flex bg-[#b4d2f2]">
        <button aria-label="Show marked" className="flex w-[21px] items-center justify-center">
          <Icon size="size-[18px]"><path d="M3 20 11 2l9 15z" fill="#86c440" stroke="#4c7527" strokeWidth="1.500" /></Icon>
        </button>
        <ToolDot />
      </div>
      <div className="flex bg-[#b4d2f2]">
        <button aria-label="Show marked edges" className="flex w-[21px] items-center justify-center">
          <Icon size="size-[18px]">
            <path d="M2 21 11 3l5 15z" fill="#86c440" stroke="#4c7527" strokeWidth="1.500" />
            <path d="m11 3 5-1 6 14-6 2z" fill="#cf3b2c" stroke="#8a4a2c" />
          </Icon>
        </button>
        <ToolDot />
      </div>
    </div>
  </div>
);

/* ---------- Windows taskbar ---------- */

const TaskButton = (props: { label: string, active?: boolean, children: ReactNode }) => (
  <button
    aria-label={props.label}
    className={clsx('relative flex w-[41px] items-center justify-center', props.active && 'bg-[#3a4047]')}
  >
    <Icon size="size-5">{props.children}</Icon>
    <span className={clsx('absolute bottom-0 h-0.5 bg-[#76b9ed]', props.active ? 'inset-x-0' : 'inset-x-1')} />
  </button>
);

const TrayButton = (props: { label: string, children: ReactNode }) => (
  <button aria-label={props.label} className="flex w-5 items-center justify-center">
    <Icon size="size-[14px]">{props.children}</Icon>
  </button>
);

const Taskbar = () => (
  <footer className="flex h-[33px] bg-[#04090e] text-white">
    <button aria-label="Start" className="flex w-10 items-center justify-center">
      <Icon size="size-[15px]"><path d="m1 4 9-1v8H1zM11 3l12-2v10H11zM1 12h9v9l-9-1zM11 12h12v11l-12-2z" fill="#fff" /></Icon>
    </button>
    <button aria-label="Search" className="flex w-10 items-center justify-center">
      <Icon size="size-[15px]"><circle cx="14" cy="9" r="7.500" stroke="#ddd" strokeWidth="1.700" /><path d="m9 14-8 8" stroke="#ddd" strokeWidth="1.700" /></Icon>
    </button>
    <button aria-label="Task view" className="mr-[3px] flex w-10 items-center justify-center">
      <Icon size="size-[15px]"><path d="M2 1v4h13V1M2 23v-4h13v4M2 8h13v8H2zM20 1v5M20 18v5M20 8v8" stroke="#ddd" strokeWidth="1.700" /></Icon>
    </button>
    <TaskButton label="Internet Explorer">
      <path d="M20 17c-4 7-14 4-14-4 0-9 14-9 14 0H8" stroke="#4dc3f4" strokeWidth="4" />
      <path d="M3 22C-2 17 12 2 22 3" stroke="#f3c22b" strokeWidth="1.800" />
    </TaskButton>
    <TaskButton label="Outlook">
      <path d="M12 4h11v13H12z" fill="#fff" stroke="#1c74c4" />
      <path d="m12 4 6 6 5-6" stroke="#1c74c4" strokeWidth="1.500" />
      <path d="m0 4 13-3v21L0 19z" fill="#1169bd" />
      <ellipse cx="6.500" cy="11.500" rx="3" ry="4" stroke="#fff" strokeWidth="2" />
      <path d="M10 14h14v9H10z" fill="#f5bd86" />
      <path d="m10 14 7 5 7-5" stroke="#b57234" />
    </TaskButton>
    <TaskButton label="Youdao">
      <rect width="24" height="24" rx="3" fill="#e3131f" />
      <text x="12" y="16.500" fontSize="11" fontWeight="700" textAnchor="middle" fill="#fff">有道</text>
    </TaskButton>
    <TaskButton label="File Explorer">
      <path d="M1 3h8l2 3h12v15H1z" fill="#e8bb4a" />
      <path d="M1 8h22v13H1z" fill="#fbe396" />
      <path d="M6 22v-8h12v8h-3v-4H9v4z" fill="#3d9ddb" />
    </TaskButton>
    <TaskButton label="Word">
      <path d="M11 3h12v18H11z" fill="#fff" />
      <path d="M14 7h7M14 10h7M14 13h7M14 16h7" stroke="#2b579a" />
      <path d="m1 4 13-3v22L1 20z" fill="#2b579a" />
      <text x="7.500" y="15.500" fontSize="10" fontWeight="700" textAnchor="middle" fill="#fff">W</text>
    </TaskButton>
    <TaskButton label="Magics" active>
      <path d="M0 0h24v24H0z" fill="#fff" />
      <path d="m4 6 5 2v8l-2 2-3-3z" fill="#1a93d2" />
      <path d="M10 6c5-2 10-1 10 4 0 3-3 5-6 6l-3 4-2-4 2-3c4 0 5-1 5-3s-3-3-6-2z" fill="#137cc0" />
    </TaskButton>
    <TaskButton label="Acrobat">
      <path d="M2 1h20v22H2z" fill="#c4161c" />
      <path d="M6 18c6-3 6-7 6-13 0 6 3 9 7 10-5-1-9 0-13 3z" stroke="#fff" strokeWidth="1.400" />
    </TaskButton>
    <TaskButton label="Recorder">
      <circle cx="11" cy="11" r="10" fill="#383838" stroke="#6a6a6a" strokeWidth="2" />
      <circle cx="16" cy="16" r="7" fill="#e31d2b" stroke="#333" strokeWidth="1.500" />
    </TaskButton>

    <div className="ml-auto flex">
      <TrayButton label="People">
        <g stroke="#e5e5e5" strokeWidth="1.800">
          <circle cx="16" cy="6" r="4" /><circle cx="8" cy="12" r="3.500" />
          <path d="M1 23c1-8 13-8 14 0M14 13c4-4 8-1 9 4" />
        </g>
      </TrayButton>
      <span className="w-[10px]" />
      <TrayButton label="Show hidden icons"><path d="m3 16 9-8 9 8" stroke="#e5e5e5" strokeWidth="2" /></TrayButton>
      <TrayButton label="OneDrive"><path d="M3 19c-4-3-1-8 3-7 1-7 11-8 12-1 6 0 7 7 2 8z" fill="#0f6cbd" /></TrayButton>
      <TrayButton label="Battery"><path d="M8 8h13v10H8z" stroke="#ddd" strokeWidth="1.800" /><path d="M10 10h9v6h-9zM21 11h2v4h-2z" fill="#ddd" /><path d="M2 5v3h5V5M4.500 8v6H8" stroke="#ddd" strokeWidth="1.800" /></TrayButton>
      <TrayButton label="Network"><path d="M3 21C3 11 11 4 21 4M9 21c0-6 5-11 12-11M15 21c0-3 3-6 6-6" stroke="#aaa" strokeWidth="1.800" /><circle cx="20" cy="20" r="2" fill="#ddd" /></TrayButton>
      <TrayButton label="Volume"><path d="M2 9h4l6-5v16l-6-5H2zM15 9q2 3 0 6M18 6q5 6 0 12M21 3q7 9 0 18" stroke="#ccc" strokeWidth="1.500" /></TrayButton>
      <button className="w-5 text-[10px]">中</button>
      <button aria-label="Sogou input" className="flex w-6 items-center justify-center">
        <Icon size="size-[14px]"><path d="m1 3 21-2 1 20-20 2z" fill="#ee4b23" /><path d="M18 7H9q-4 0-3 3t6 2q6 0 5 3t-4 3H6" stroke="#fff" strokeWidth="3" /></Icon>
      </button>
      <button className="w-16 whitespace-nowrap text-center text-[10px] leading-4">
        <span className="block">5:38 PM</span>
        <span className="block">7/4/2019</span>
      </button>
      <button aria-label="Notifications" className="relative mr-[9px] flex w-7 items-center justify-center">
        <Icon size="size-[15px]"><path d="M1 2h22v16H11l-5 5v-5H1z" fill="#fff" /><path d="M5 7h14M5 10h14M5 13h14" stroke="#222" strokeWidth="1.300" /></Icon>
        <span className="absolute bottom-[5px] right-[3px] size-3 rounded-full bg-[#4a4e52] text-center text-[9px] leading-3">4</span>
      </button>
      <span className="mr-0.5 w-px bg-[#4a4e52]" />
    </div>
  </footer>
);

export default function App() {
  return (
    <div className="flex min-h-screen flex-col bg-white font-['Open_Sans','Noto_Sans_CJK_SC',sans-serif]">
      <TitleBar />
      <RibbonTabs />
      <Ribbon />
      <div className="flex flex-1">
        <Viewport />
        <ToolPages />
      </div>
      <Toolbar />
      <div className="h-[17px] bg-[#2693f5] px-[5px] text-[10px] leading-4 text-[#0c2c5c]">准备完毕</div>
      <Taskbar />
    </div>
  );
}
